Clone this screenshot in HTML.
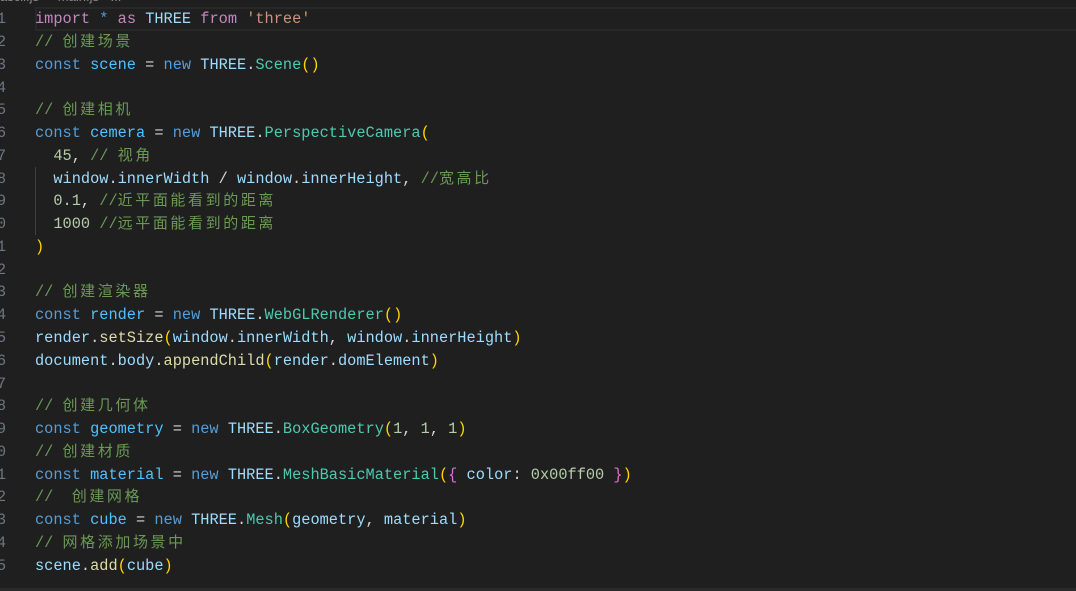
<!DOCTYPE html>
<html><head><meta charset="utf-8"><style>
html,body{margin:0;padding:0;background:#1f1f1f;width:1076px;height:591px;overflow:hidden;position:relative}
.l{position:absolute;left:35px;height:23px;line-height:23px;font-family:"Liberation Mono","Noto Sans CJK SC",monospace;font-size:15.3px;white-space:pre;color:#d4d4d4;margin-top:1px}
.n{position:absolute;left:-21px;width:27px;text-align:right;height:23px;line-height:23px;font-family:"Liberation Mono",monospace;font-size:15.3px;color:#6e7681;margin-top:1px}
.k{color:#c586c0}.b{color:#569cd6}.v{color:#9cdcfe}.c{color:#4fc1ff}.t{color:#4ec9b0}.f{color:#dcdcaa}.s{color:#ce9178}.m{color:#6a9955}.num{color:#b5cea8}.y{color:#ffd700}.p{color:#da70d6}
.z{letter-spacing:2.6px;font-family:"Noto Sans CJK SC",sans-serif;font-size:15px;line-height:1}
#hl{position:absolute;left:35px;right:0;top:7px;height:20px;border:2px solid #282828;border-right:none}
#ig{position:absolute;left:35px;top:167px;width:1px;height:68px;background:#404040}
#bot{position:absolute;left:0;right:0;top:588px;height:3px;background:#2a2a2a}
#top{position:absolute;left:0;top:-11px;font-family:"Liberation Sans",sans-serif;font-size:13px;color:#8a8a8a;white-space:pre}
</style></head><body>
<div id="top">ascii.js  ›  main.js › ...</div>
<div id="hl"></div><div id="ig"></div><div id="bot"></div>
<div class="n" style="top:7px">1</div><div class="l" style="top:7px"><span class="k">import</span> <span class="b">*</span> <span class="k">as</span> <span class="v">THREE</span> <span class="k">from</span> <span class="s">'three'</span></div>
<div class="n" style="top:30px">2</div><div class="l m" style="top:30px">// <span class="z">创建场景</span></div>
<div class="n" style="top:53px">3</div><div class="l" style="top:53px"><span class="b">const</span> <span class="c">scene</span> = <span class="b">new</span> <span class="v">THREE</span>.<span class="t">Scene</span><span class="y">()</span></div>
<div class="n" style="top:76px">4</div>
<div class="n" style="top:98px">5</div><div class="l m" style="top:98px">// <span class="z">创建相机</span></div>
<div class="n" style="top:121px">6</div><div class="l" style="top:121px"><span class="b">const</span> <span class="c">cemera</span> = <span class="b">new</span> <span class="v">THREE</span>.<span class="t">PerspectiveCamera</span><span class="y">(</span></div>
<div class="n" style="top:144px">7</div><div class="l" style="top:144px">  <span class="num">45</span>, <span class="m">// <span class="z">视角</span></span></div>
<div class="n" style="top:167px">8</div><div class="l" style="top:167px">  <span class="v">window</span>.<span class="v">innerWidth</span> / <span class="v">window</span>.<span class="v">innerHeight</span>, <span class="m">//<span class="z">宽高比</span></span></div>
<div class="n" style="top:189px">9</div><div class="l" style="top:189px">  <span class="num">0.1</span>, <span class="m">//<span class="z">近平面能看到的距离</span></span></div>
<div class="n" style="top:212px">10</div><div class="l" style="top:212px">  <span class="num">1000</span> <span class="m">//<span class="z">远平面能看到的距离</span></span></div>
<div class="n" style="top:235px">11</div><div class="l" style="top:235px"><span class="y">)</span></div>
<div class="n" style="top:258px">12</div>
<div class="n" style="top:280px">13</div><div class="l m" style="top:280px">// <span class="z">创建渲染器</span></div>
<div class="n" style="top:303px">14</div><div class="l" style="top:303px"><span class="b">const</span> <span class="c">render</span> = <span class="b">new</span> <span class="v">THREE</span>.<span class="t">WebGLRenderer</span><span class="y">()</span></div>
<div class="n" style="top:326px">15</div><div class="l" style="top:326px"><span class="v">render</span>.<span class="f">setSize</span><span class="y">(</span><span class="v">window</span>.<span class="v">innerWidth</span>, <span class="v">window</span>.<span class="v">innerHeight</span><span class="y">)</span></div>
<div class="n" style="top:349px">16</div><div class="l" style="top:349px"><span class="v">document</span>.<span class="v">body</span>.<span class="f">appendChild</span><span class="y">(</span><span class="v">render</span>.<span class="v">domElement</span><span class="y">)</span></div>
<div class="n" style="top:372px">17</div>
<div class="n" style="top:394px">18</div><div class="l m" style="top:394px">// <span class="z">创建几何体</span></div>
<div class="n" style="top:417px">19</div><div class="l" style="top:417px"><span class="b">const</span> <span class="c">geometry</span> = <span class="b">new</span> <span class="v">THREE</span>.<span class="t">BoxGeometry</span><span class="y">(</span><span class="num">1</span>, <span class="num">1</span>, <span class="num">1</span><span class="y">)</span></div>
<div class="n" style="top:440px">20</div><div class="l m" style="top:440px">// <span class="z">创建材质</span></div>
<div class="n" style="top:463px">21</div><div class="l" style="top:463px"><span class="b">const</span> <span class="c">material</span> = <span class="b">new</span> <span class="v">THREE</span>.<span class="t">MeshBasicMaterial</span><span class="y">(</span><span class="p">{</span> <span class="v">color</span>: <span class="num">0x00ff00</span> <span class="p">}</span><span class="y">)</span></div>
<div class="n" style="top:485px">22</div><div class="l m" style="top:485px">//  <span class="z">创建网格</span></div>
<div class="n" style="top:508px">23</div><div class="l" style="top:508px"><span class="b">const</span> <span class="c">cube</span> = <span class="b">new</span> <span class="v">THREE</span>.<span class="t">Mesh</span><span class="y">(</span><span class="v">geometry</span>, <span class="v">material</span><span class="y">)</span></div>
<div class="n" style="top:531px">24</div><div class="l m" style="top:531px">// <span class="z">网格添加场景中</span></div>
<div class="n" style="top:554px">25</div><div class="l" style="top:554px"><span class="v">scene</span>.<span class="f">add</span><span class="y">(</span><span class="v">cube</span><span class="y">)</span></div>
</body></html>
